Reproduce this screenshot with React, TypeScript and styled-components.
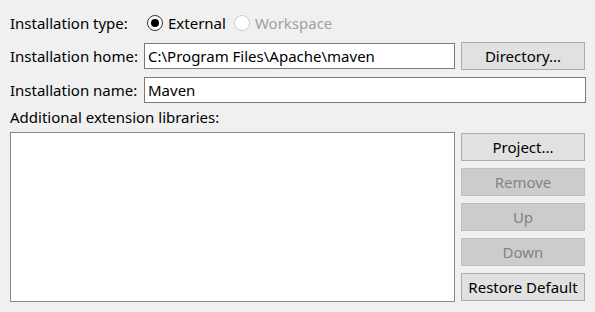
import React from "react";
import styled, { createGlobalStyle } from "styled-components";

const Global = createGlobalStyle`
  html, body { margin: 0; padding: 0; background: #f0f0f0; }
  body { font-family: "Noto Sans", "Open Sans", sans-serif; font-size: 15px; color: #000; }
`;

const Page = styled.div`
  width: 595px;
  height: 312px;
  box-sizing: border-box;
  padding: 11px 10px 0 10px;
  background: #f0f0f0;
  display: flex;
  flex-direction: column;
`;

const Form = styled.div`
  display: grid;
  grid-template-columns: 128px 1fr 124px;
  grid-template-rows: 24px 28px 26px;
  column-gap: 6px;
  row-gap: 7px;
  align-items: center;
  & > :nth-child(n + 5) { margin-top: -1px; }
`;

const Label = styled.span`
  white-space: nowrap;
  line-height: 20px;
`;

const RadioGroup = styled.div`
  grid-column: 2 / 4;
  display: flex;
  align-items: center;
  gap: 8px;
  padding-left: 3px;
`;

const RadioItem = styled.label<{ $disabled?: boolean }>`
  display: flex;
  align-items: center;
  gap: 5px;
  color: ${(p) => (p.$disabled ? "#a0a0a0" : "#000")};
  line-height: 20px;
`;

const RadioCircle = styled.span<{ $checked?: boolean; $disabled?: boolean }>`
  width: 16px;
  height: 16px;
  box-sizing: border-box;
  border-radius: 50%;
  border: 1px solid ${(p) => (p.$disabled ? "#cccccc" : "#333333")};
  background: #fff;
  display: flex;
  align-items: center;
  justify-content: center;
  &::after {
    content: "";
    display: ${(p) => (p.$checked ? "block" : "none")};
    width: 8px;
    height: 8px;
    border-radius: 50%;
    background: #000;
  }
`;

const TextInput = styled.div<{ $span?: boolean }>`
  grid-column: ${(p) => (p.$span ? "2 / 4" : "2 / 3")};
  height: 26px;
  box-sizing: border-box;
  border: 1px solid #7a7a7a;
  background: #fff;
  padding: 0 3px;
  display: flex;
  align-items: center;
  white-space: nowrap;
  margin-right: ${(p) => (p.$span ? "-1px" : "0")};
`;

const Button = styled.div<{ $disabled?: boolean }>`
  height: 28px;
  box-sizing: border-box;
  border: 1px solid ${(p) => (p.$disabled ? "#bfbfbf" : "#adadad")};
  background: ${(p) => (p.$disabled ? "#cccccc" : "#e1e1e1")};
  color: ${(p) => (p.$disabled ? "#838383" : "#000")};
  display: flex;
  align-items: center;
  justify-content: center;
  white-space: nowrap;
`;

const SectionLabel = styled.div`
  height: 22px;
  margin-top: 3px;
  display: flex;
  align-items: center;
`;

const Lower = styled.div`
  margin-top: 4px;
  display: flex;
  gap: 6px;
  align-items: flex-start;
`;

const ListBox = styled.div`
  flex: 1;
  height: 170px;
  box-sizing: border-box;
  border: 1px solid #828790;
  background: #fff;
`;

const ButtonColumn = styled.div`
  width: 124px;
  margin-top: 1px;
  display: flex;
  flex-direction: column;
  gap: 7px;
`;

export default function App() {
  return (
    <>
      <Global />
      <Page>
        <Form>
          <Label>Installation type:</Label>
          <RadioGroup>
            <RadioItem>
              <RadioCircle $checked />
              External
            </RadioItem>
            <RadioItem $disabled>
              <RadioCircle $disabled />
              Workspace
            </RadioItem>
          </RadioGroup>
          <Label>Installation home:</Label>
          <TextInput>C:\Program Files\Apache\maven</TextInput>
          <Button>Directory...</Button>
          <Label>Installation name:</Label>
          <TextInput $span>Maven</TextInput>
        </Form>
        <SectionLabel>Additional extension libraries:</SectionLabel>
        <Lower>
          <ListBox />
          <ButtonColumn>
            <Button>Project...</Button>
            <Button $disabled>Remove</Button>
            <Button $disabled>Up</Button>
            <Button $disabled>Down</Button>
            <Button>Restore Default</Button>
          </ButtonColumn>
        </Lower>
      </Page>
    </>
  );
}
